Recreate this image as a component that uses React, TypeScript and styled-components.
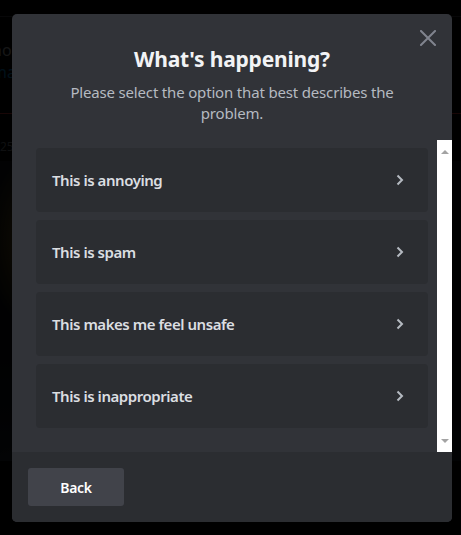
import React from "react";
import styled, { createGlobalStyle } from "styled-components";

const Global = createGlobalStyle`
  html, body { margin: 0; padding: 0; background: #000; }
  body { font-family: "Noto Sans", "Open Sans", sans-serif; width: 461px; height: 535px; overflow: hidden; }
  * { box-sizing: border-box; }
`;

const Page = styled.div`
  position: relative;
  width: 461px;
  height: 535px;
  overflow: hidden;
  background: #000;
`;

const Underlay = styled.div`
  position: absolute;
  inset: 0;
  display: flex;
  flex-direction: column;
  opacity: 0.22;
`;

const UnderTopBar = styled.div`
  height: 17px;
  border-bottom: 1px solid #4e5058;
`;

const UnderMsg = styled.div`
  padding: 22px 0 0 0;
  margin-left: -8px;
  font-family: "Noto Sans", sans-serif;
  font-size: 16px;
  line-height: 22px;
  color: #dbdee1;
`;

const UnderLink = styled.div`
  color: #00a8fc;
  font-size: 16px;
  line-height: 22px;
`;

const UnderDivider = styled.div`
  margin-top: 30px;
  height: 1px;
  background: #f23f43;
`;

const UnderTime = styled.div`
  margin-top: 24px;
  font-size: 12px;
  color: #949ba4;
`;

const UnderImage = styled.div`
  margin-top: 6px;
  height: 300px;
  width: 100%;
  background:
    radial-gradient(ellipse 60px 120px at 30px 80px, #a07f22 0%, transparent 70%),
    radial-gradient(ellipse 80px 90px at 20px 330px, #2a3644 0%, transparent 70%),
    linear-gradient(180deg, #1a1d22 0%, #0f1318 60%, #1c2430 100%);
`;

const Overlay = styled.div`
  position: absolute;
  inset: 0;
  background: rgba(0, 0, 0, 0.55);
  padding: 14px 0 0 12px;
  display: flex;
  align-items: flex-start;
`;

const Modal = styled.div`
  position: relative;
  width: 440px;
  height: 508px;
  background: #313338;
  border-radius: 5px;
  display: flex;
  flex-direction: column;
  overflow: hidden;
`;

const Header = styled.div`
  padding: 32px 24px 16px;
  display: flex;
  flex-direction: column;
  align-items: center;
  text-align: center;
`;

const Title = styled.h1`
  margin: 0;
  font-family: "Noto Sans", sans-serif;
  font-weight: 700;
  font-size: 21px;
  line-height: 26px;
  color: #f2f3f5;
  letter-spacing: -0.2px;
`;

const Subtitle = styled.p`
  margin: 10px 0 0;
  font-family: "Noto Sans", sans-serif;
  font-weight: 400;
  font-size: 15px;
  line-height: 21px;
  color: #b5bac1;
  letter-spacing: -0.17px;
  max-width: 340px;
`;

const CloseButton = styled.button`
  position: absolute;
  top: 16px;
  right: 16px;
  width: 16px;
  height: 16px;
  padding: 0;
  border: 0;
  background: transparent;
  color: #80848e;
  display: flex;
  cursor: pointer;
`;

const ScrollArea = styled.div`
  flex: 1;
  display: flex;
  min-height: 0;
`;

const List = styled.div`
  flex: 1;
  padding: 8px 9px 24px 24px;
  display: flex;
  flex-direction: column;
  gap: 8px;
  overflow: hidden;
`;

const Option = styled.button`
  height: 64px;
  flex: none;
  border: 0;
  border-radius: 4px;
  background: #2b2d31;
  padding: 0 24px 0 16px;
  display: flex;
  align-items: center;
  justify-content: space-between;
  cursor: pointer;
  text-align: left;
`;

const OptionLabel = styled.span`
  font-family: "Noto Sans", sans-serif;
  font-weight: 600;
  font-size: 15px;
  line-height: 20px;
  color: #dbdee1;
  letter-spacing: -0.45px;
`;

const Chevron = styled.svg`
  width: 8px;
  height: 12px;
  color: #b5bac1;
  flex: none;
`;

const Scrollbar = styled.div`
  width: 15px;
  flex: none;
  background: #ffffff;
  display: flex;
  flex-direction: column;
  justify-content: space-between;
  align-items: center;
  padding: 10px 0 9px;
`;

const Arrow = styled.div<{ $down?: boolean }>`
  width: 0;
  height: 0;
  border-left: 4px solid transparent;
  border-right: 4px solid transparent;
  ${(p) => (p.$down ? "border-top: 4px solid #a3a3a3;" : "border-bottom: 4px solid #a3a3a3;")}
`;

const Footer = styled.div`
  height: 70px;
  flex: none;
  background: #2b2d31;
  padding: 16px;
  display: flex;
  align-items: center;
`;

const BackButton = styled.button`
  width: 96px;
  height: 38px;
  border: 0;
  border-radius: 3px;
  background: #41434a;
  color: #ffffff;
  font-family: "Noto Sans", sans-serif;
  font-weight: 600;
  font-size: 14px;
  letter-spacing: -0.3px;
  cursor: pointer;
`;

const options = [
  "This is annoying",
  "This is spam",
  "This makes me feel unsafe",
  "This is inappropriate",
];

export default function App() {
  return (
    <Page>
      <Global />
      <Underlay>
        <UnderTopBar />
        <UnderMsg>
          ho
          <UnderLink>ma</UnderLink>
        </UnderMsg>
        <UnderDivider />
        <UnderTime>25</UnderTime>
        <UnderImage />
      </Underlay>
      <Overlay>
        <Modal>
          <CloseButton aria-label="Close">
            <svg width="16" height="16" viewBox="0 0 16 16" fill="none">
              <path d="M1 1 L15 15 M15 1 L1 15" stroke="currentColor" strokeWidth="2" strokeLinecap="square" />
            </svg>
          </CloseButton>
          <Header>
            <Title>What's happening?</Title>
            <Subtitle>Please select the option that best describes the problem.</Subtitle>
          </Header>
          <ScrollArea>
            <List>
              {options.map((o) => (
                <Option key={o}>
                  <OptionLabel>{o}</OptionLabel>
                  <Chevron viewBox="0 0 8 12" fill="none">
                    <path d="M1.5 1.5 L6 6 L1.5 10.5" stroke="currentColor" strokeWidth="2" />
                  </Chevron>
                </Option>
              ))}
            </List>
            <Scrollbar>
              <Arrow />
              <Arrow $down />
            </Scrollbar>
          </ScrollArea>
          <Footer>
            <BackButton>Back</BackButton>
          </Footer>
        </Modal>
      </Overlay>
    </Page>
  );
}
